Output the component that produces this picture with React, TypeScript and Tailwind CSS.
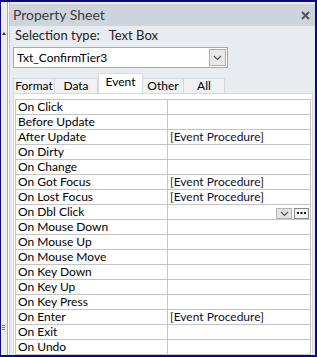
import React from "react";

const rows: [string, string][] = [
  ["On Click", ""],
  ["Before Update", ""],
  ["After Update", "[Event Procedure]"],
  ["On Dirty", ""],
  ["On Change", ""],
  ["On Got Focus", "[Event Procedure]"],
  ["On Lost Focus", "[Event Procedure]"],
  ["On Dbl Click", "__buttons__"],
  ["On Mouse Down", ""],
  ["On Mouse Up", ""],
  ["On Mouse Move", ""],
  ["On Key Down", ""],
  ["On Key Up", ""],
  ["On Key Press", ""],
  ["On Enter", "[Event Procedure]"],
  ["On Exit", ""],
  ["On Undo", ""],
];

function Chevron() {
  return (
    <svg width="9" height="6" viewBox="0 0 9 6">
      <path d="M1 1 L4.5 4.5 L8 1" fill="none" stroke="#555" strokeWidth="1.2" />
    </svg>
  );
}

export default function App() {
  const font = { fontFamily: 'Lato, "Noto Sans", sans-serif' };
  return (
    <div
      className="w-[317px] h-[357px] flex border-t-2 border-r-2 border-b-2 border-l border-[#0a0a82] overflow-hidden text-[12px] text-black"
      style={font}
    >
      {/* left strip */}
      <div className="flex w-[9px] shrink-0">
        <div className="w-[6px] bg-[#eceff2] flex flex-col items-start">
          <div className="mt-[30px] ml-[1px] w-0 h-0 border-l-[2px] border-r-[2px] border-b-[3px] border-l-transparent border-r-transparent border-b-[#333]" />
          <div className="mt-[290px] ml-[1px] flex flex-col gap-[1px]">
            <div className="w-[3px] h-px bg-[#777]" />
            <div className="w-[3px] h-px bg-[#777]" />
            <div className="w-[3px] h-px bg-[#777]" />
          </div>
        </div>
        <div className="w-px bg-[#a5aab0]" />
        <div className="w-px bg-white" />
        <div className="w-px bg-[#c9cdd2]" />
      </div>

      {/* main panel */}
      <div className="flex-1 flex flex-col bg-[#e8ebef] pt-[2px]">
        <div className="h-[22px] bg-[#ced4dc] flex items-center justify-between pl-[3px] pr-[5px] shrink-0">
          <span className="text-[14px] leading-[16px] text-[#3c3c3c]">Property Sheet</span>
          <svg width="9" height="9" viewBox="0 0 9 9">
            <path d="M1 1 L8 8 M8 1 L1 8" stroke="#555" strokeWidth="2" />
          </svg>
        </div>
        <div className="pl-[3px] pr-[2px] flex flex-col flex-1">
          <div className="h-[17px] mt-[1px] flex items-center pl-[2px] text-[13px] text-[#222]">
            <span>Selection type:</span>
            <span className="ml-[9px]">Text Box</span>
          </div>
          <div className="mt-[3px] w-[215px] h-[21px] border border-[#a8a8a8] bg-white flex items-center">
            <span className="flex-1 pl-[3px]">Txt_ConfirmTier3</span>
            <div className="w-[17px] h-[17px] mr-px border border-[#b0b0b0] bg-[#e8e8e8] flex items-center justify-center">
              <Chevron />
            </div>
          </div>
          {/* tabs */}
          <div className="mt-[5px] h-[20px] flex items-end leading-[14px]">
            <div className="h-[15px] w-[42px] border border-b-0 border-[#d6d9dd] bg-[#f0f1f3] flex items-center justify-center">Format</div>
            <div className="h-[15px] w-[43px] border border-b-0 border-l-0 border-[#d6d9dd] bg-[#f0f1f3] flex items-center justify-center">Data</div>
            <div className="h-[20px] w-[45px] border border-b-0 border-[#d6d9dd] bg-white flex items-center justify-center pb-[3px]">Event</div>
            <div className="h-[15px] w-[41px] border border-b-0 border-l-0 border-[#d6d9dd] bg-[#f0f1f3] flex items-center justify-center">Other</div>
            <div className="h-[15px] w-[41px] border border-b-0 border-l-0 border-[#d6d9dd] bg-[#f0f1f3] flex items-center justify-center">All</div>
          </div>
          <div className="flex-1 bg-white border-l border-t border-r border-[#d6d9dd] pl-px pt-[5px] pr-px">
            <div className="border-t border-l border-r border-[#c4c4c4]">
              {rows.map(([label, value]) => (
                <div key={label} className="h-[15px] flex border-b border-[#c4c4c4] leading-[14px]">
                  <div className="w-[152px] border-r border-[#c4c4c4] pl-[2px] shrink-0 whitespace-nowrap">{label}</div>
                  <div className="flex-1 pl-[2px] flex whitespace-nowrap">
                    {value === "__buttons__" ? (
                      <div className="flex-1 flex justify-end items-end gap-[2px] pr-px">
                        <div className="w-[16px] h-[11px] bg-[#e3e3e3] border border-[#b4b4b4] flex items-center justify-center">
                          <Chevron />
                        </div>
                        <div className="w-[15px] h-[11px] bg-[#f3f3f3] border border-[#8a8a8a] flex items-center justify-center">
                          <svg width="9" height="3" viewBox="0 0 9 3">
                            <rect x="0" y="0" width="2" height="2" fill="#111" />
                            <rect x="3.5" y="0" width="2" height="2" fill="#111" />
                            <rect x="7" y="0" width="2" height="2" fill="#111" />
                          </svg>
                        </div>
                      </div>
                    ) : (
                      <span className="text-[#101030]">{value}</span>
                    )}
                  </div>
                </div>
              ))}
            </div>
          </div>
        </div>
      </div>
    </div>
  );
}
